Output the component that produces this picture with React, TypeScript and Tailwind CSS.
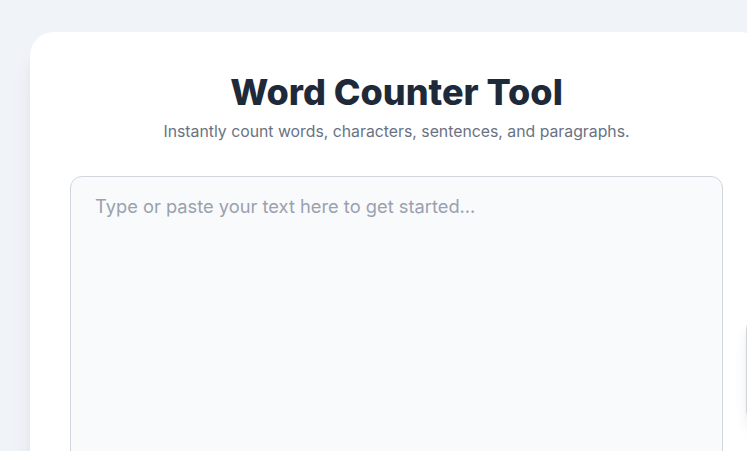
import { useState } from 'react'

export default function App() {
  const [text, setText] = useState('')

  return (
    <div className="relative min-h-screen overflow-hidden bg-[#f0f4f8] font-['Inter',sans-serif]">
      <div className="ml-[30px] mt-[32px] w-[733px] rounded-3xl bg-white p-10 shadow-xl">
        <h1 className="mb-2 text-center text-4xl font-extrabold text-gray-800">Word Counter Tool</h1>
        <p className="mb-8 text-center text-[15.8px] leading-6 text-gray-500">
          Instantly count words, characters, sentences, and paragraphs.
        </p>
        <textarea
          value={text}
          onChange={(e) => setText(e.target.value)}
          placeholder="Type or paste your text here to get started..."
          className="block h-[320px] w-full resize-none rounded-xl border border-gray-300 bg-gray-50 px-6 pt-[15px] pb-6 text-[18.3px] leading-7 text-gray-800 placeholder:text-gray-400 outline-none"
        />
      </div>

      {/* stats panel peeking in from the right */}
      <div className="absolute left-[746px] top-[317px] h-[106px] w-[220px] rounded-xl border border-gray-300 bg-white shadow-lg" />
    </div>
  )
}
